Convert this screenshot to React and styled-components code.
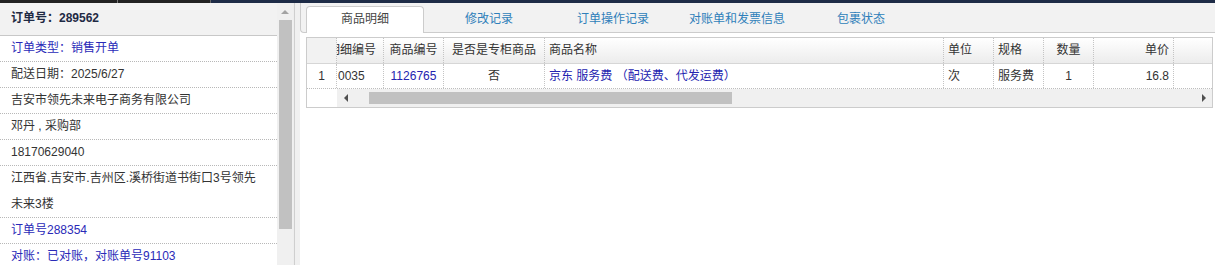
import React from "react";
import styled, { createGlobalStyle } from "styled-components";

const GlobalStyle = createGlobalStyle`
  html, body { margin: 0; padding: 0; background: #fff; }
  body {
    font-family: "Liberation Sans", "Noto Sans CJK SC", sans-serif;
    font-size: 12px;
    color: #333;
    overflow: hidden;
  }
  * { box-sizing: border-box; }
`;

const Page = styled.div`
  display: flex;
  flex-direction: column;
  width: 1215px;
  height: 265px;
  overflow: hidden;
`;

const TopBar = styled.div`
  height: 3px;
  flex: none;
  background: linear-gradient(to right, #222 0 117px, #777 117px 118px, #222 118px 210px, #666 210px 211px, #1e2c47 211px);
`;

const Main = styled.div`
  display: flex;
  flex: 1;
  min-height: 0;
`;

const LeftPanel = styled.div`
  display: flex;
  width: 293px;
  flex: none;
`;

const LeftContent = styled.div`
  width: 277px;
  flex: none;
  display: flex;
  flex-direction: column;
`;

const LeftHeader = styled.div`
  height: 33px;
  flex: none;
  background: #f2f2f2;
  border-bottom: 1px solid #c8c8c8;
  padding-left: 11px;
  line-height: 31px;
  font-weight: bold;
  color: #1f2a44;
`;

const InfoRow = styled.div`
  padding-left: 11px;
  line-height: ${(p) => (p.$multi ? "25.5px" : "25px")};
  border-bottom: 1px dotted #b8b8b8;
  color: ${(p) => (p.$link ? "#2a2ab8" : "#333")};
  white-space: nowrap;
`;

const VScroll = styled.div`
  width: 16px;
  flex: none;
  background: #f0f0f0;
  display: flex;
  flex-direction: column;
`;

const ScrollBtn = styled.div`
  height: 17px;
  width: ${(p) => (p.$w ? p.$w : "100%")};
  flex: none;
  display: flex;
  align-items: center;
  justify-content: center;
`;

const VThumb = styled.div`
  height: 209px;
  margin: 0 1px 0 2px;
  background: #c1c1c1;
`;

const Splitter = styled.div`
  width: 7px;
  flex: none;
  background: linear-gradient(to right, #eeeeee 0 1px, #cfcfcf 1px 2px, #f0f0f0 2px);
`;

const RightPanel = styled.div`
  flex: 1;
  min-width: 0;
  display: flex;
  flex-direction: column;
  background: #fff;
`;

const TabStrip = styled.div`
  height: 30px;
  flex: none;
  display: flex;
  align-items: flex-end;
  gap: 6px;
  padding-left: 5px;
  background: #f2f2f2;
  border-left: 1px solid #cccccc;
  border-bottom: 1px solid #cccccc;
  border-bottom-left-radius: 4px;
`;

const Tab = styled.div`
  width: 118px;
  height: 27px;
  margin-bottom: -1px;
  flex: none;
  text-align: center;
  line-height: 24px;
  border: 1px solid ${(p) => (p.$active ? "#cccccc" : "transparent")};
  border-bottom: none;
  border-radius: 4px 4px 0 0;
  background: ${(p) => (p.$active ? "#fff" : "transparent")};
  color: ${(p) => (p.$active ? "#444" : "#2f7fba")};
`;

const Content = styled.div`
  padding: 4px 2px 0 6px;
`;

const Grid = styled.div`
  border: 1px solid #cccccc;
`;

const COLS = "30px 47px 60px 101px 399px 50px 50px 50px 80px 1fr";

const HeadRow = styled.div`
  display: grid;
  grid-template-columns: ${COLS};
  height: 26px;
  border-bottom: 1px solid #d6d6d6;
  background: linear-gradient(to bottom, #ffffff, #ececec);
`;

const DataRow = styled.div`
  display: grid;
  grid-template-columns: ${COLS};
  height: 25px;
  border-bottom: 1px dotted #bdbdbd;
  background: #fff;
`;

const Cell = styled.div`
  overflow: hidden;
  white-space: nowrap;
  border-right: ${(p) => (p.$last ? "none" : "1px dotted #c4c4c4")};
  text-align: ${(p) => p.$align || "left"};
  padding: 0 ${(p) => (p.$align === "right" ? "4px" : "0")} 0 ${(p) => (p.$align === "left" ? "4px" : "0")};
  line-height: ${(p) => (p.$head ? "25px" : "24px")};
  color: ${(p) => (p.$link ? "#2424b0" : "#333")};
  background: ${(p) => (p.$num && p.$head ? "#f2f2f2" : "transparent")};
`;

const Shifted = styled.span`
  display: inline-block;
  margin-left: ${(p) => p.$offset}px;
`;

const HScrollRow = styled.div`
  display: flex;
  height: 18px;
`;

const HScrollSpacer = styled.div`
  width: 30px;
  flex: none;
  background: #fff;
`;

const HTrack = styled.div`
  flex: 1;
  display: flex;
  background: #f0f0f0;
`;

const HTrackInner = styled.div`
  flex: 1;
  padding: 3px 0 2px 15px;
`;

const HThumb = styled.div`
  width: 363px;
  height: 12px;
  background: #c1c1c1;
`;

const Tri = styled.span`
  width: 0;
  height: 0;
  border-style: solid;
  ${(p) =>
    p.$dir === "up"
      ? `border-width: 0 4px 4px 4px; border-color: transparent transparent #a3a3a3 transparent;`
      : p.$dir === "left"
      ? `border-width: 4px 4px 4px 0; border-color: transparent #505050 transparent transparent;`
      : `border-width: 4px 0 4px 4px; border-color: transparent transparent transparent #505050;`}
`;

const infoRows = [
  { text: "订单类型：销售开单", link: true },
  { text: "配送日期：2025/6/27" },
  { text: "吉安市领先未来电子商务有限公司" },
  { text: "邓丹 , 采购部" },
  { text: "18170629040" },
  { text: ["江西省.吉安市.吉州区.溪桥街道书街口3号领先", "未来3楼"], multi: true },
  { text: "订单号288354", link: true },
  { text: "对账：已对账，对账单号91103", link: true },
];

const tabs = ["商品明细", "修改记录", "订单操作记录", "对账单和发票信息", "包裹状态"];

export default function App() {
  return (
    <>
      <GlobalStyle />
      <Page>
        <TopBar />
        <Main>
          <LeftPanel>
            <LeftContent>
              <LeftHeader>订单号：289562</LeftHeader>
              {infoRows.map((r, i) => (
                <InfoRow key={i} $link={r.link} $multi={r.multi}>
                  {r.multi ? (
                    <>
                      {r.text[0]}
                      <br />
                      {r.text[1]}
                    </>
                  ) : (
                    r.text
                  )}
                </InfoRow>
              ))}
            </LeftContent>
            <VScroll>
              <ScrollBtn>
                <Tri $dir="up" />
              </ScrollBtn>
              <VThumb />
            </VScroll>
          </LeftPanel>
          <Splitter />
          <RightPanel>
            <TabStrip>
              {tabs.map((t, i) => (
                <Tab key={t} $active={i === 0}>
                  {t}
                </Tab>
              ))}
            </TabStrip>
            <Content>
              <Grid>
                <HeadRow>
                  <Cell $head $num />
                  <Cell $head>
                    <Shifted $offset={-9}>明细编号</Shifted>
                  </Cell>
                  <Cell $head $align="center">商品编号</Cell>
                  <Cell $head $align="center">是否是专柜商品</Cell>
                  <Cell $head $align="left">商品名称</Cell>
                  <Cell $head $align="left">单位</Cell>
                  <Cell $head $align="left">规格</Cell>
                  <Cell $head $align="center">数量</Cell>
                  <Cell $head $align="right">单价</Cell>
                  <Cell $head $last />
                </HeadRow>
                <DataRow>
                  <Cell $align="center">1</Cell>
                  <Cell>
                    <Shifted $offset={1}>0035</Shifted>
                  </Cell>
                  <Cell $align="center" $link>1126765</Cell>
                  <Cell $align="center">否</Cell>
                  <Cell $align="left" $link>京东 服务费 （配送费、代发运费）</Cell>
                  <Cell $align="left">次</Cell>
                  <Cell $align="left">服务费</Cell>
                  <Cell $align="center">1</Cell>
                  <Cell $align="right">16.8</Cell>
                  <Cell $last />
                </DataRow>
                <HScrollRow>
                  <HScrollSpacer />
                  <HTrack>
                    <ScrollBtn $w="17px">
                      <Tri $dir="left" />
                    </ScrollBtn>
                    <HTrackInner>
                      <HThumb />
                    </HTrackInner>
                    <ScrollBtn $w="17px">
                      <Tri $dir="right" />
                    </ScrollBtn>
                  </HTrack>
                </HScrollRow>
              </Grid>
            </Content>
          </RightPanel>
        </Main>
      </Page>
    </>
  );
}
